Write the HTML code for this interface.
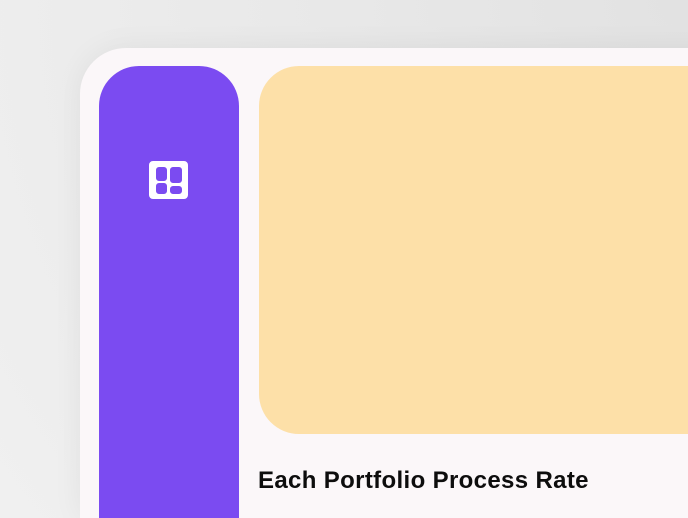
<!DOCTYPE html>
<html><head><style>
html,body{margin:0;padding:0;width:688px;height:518px;overflow:hidden}
body{position:relative;background:radial-gradient(circle at 100% 0%,#e2e2e2 0%,#e8e8e8 40%,#f0f0f0 100%);font-family:"Liberation Sans",sans-serif}
.card{position:absolute;left:80px;top:48px;width:700px;height:470px;background:#fbf7f9;border-radius:46px 46px 0 0;box-shadow:0 0 30px rgba(0,0,0,0.06)}
.side{position:absolute;left:99px;top:66px;width:140px;height:452px;background:#7b4bf1;border-radius:40px 40px 0 0}
.hero{position:absolute;left:259px;top:66px;width:600px;height:368px;background:#fde0a8;border-radius:40px}
h1{position:absolute;left:258px;top:466px;margin:0;font-size:24px;font-weight:bold;color:#0d0d0d;letter-spacing:0.35px;line-height:30px}
svg{position:absolute;left:149px;top:161px}
</style></head><body>
<div class="card"></div>
<div class="side"></div>
<svg width="39" height="38" viewBox="0 0 39 38">
<path fill="#fff" fill-rule="evenodd" d="M4 0H35A4 4 0 0 1 39 4V34A4 4 0 0 1 35 38H4A4 4 0 0 1 0 34V4A4 4 0 0 1 4 0Z
M10 6H15A3 3 0 0 1 18 9V17A3 3 0 0 1 15 20H10A3 3 0 0 1 7 17V9A3 3 0 0 1 10 6Z
M10 22H15A3 3 0 0 1 18 25V30A3 3 0 0 1 15 33H10A3 3 0 0 1 7 30V25A3 3 0 0 1 10 22Z
M24 6H30A3 3 0 0 1 33 9V19A3 3 0 0 1 30 22H24A3 3 0 0 1 21 19V9A3 3 0 0 1 24 6Z
M24 25H30A3 3 0 0 1 33 28V30A3 3 0 0 1 30 33H24A3 3 0 0 1 21 30V28A3 3 0 0 1 24 25Z"/>
</svg>
<div class="hero"></div>
<h1>Each Portfolio Process Rate</h1>
</body></html>
